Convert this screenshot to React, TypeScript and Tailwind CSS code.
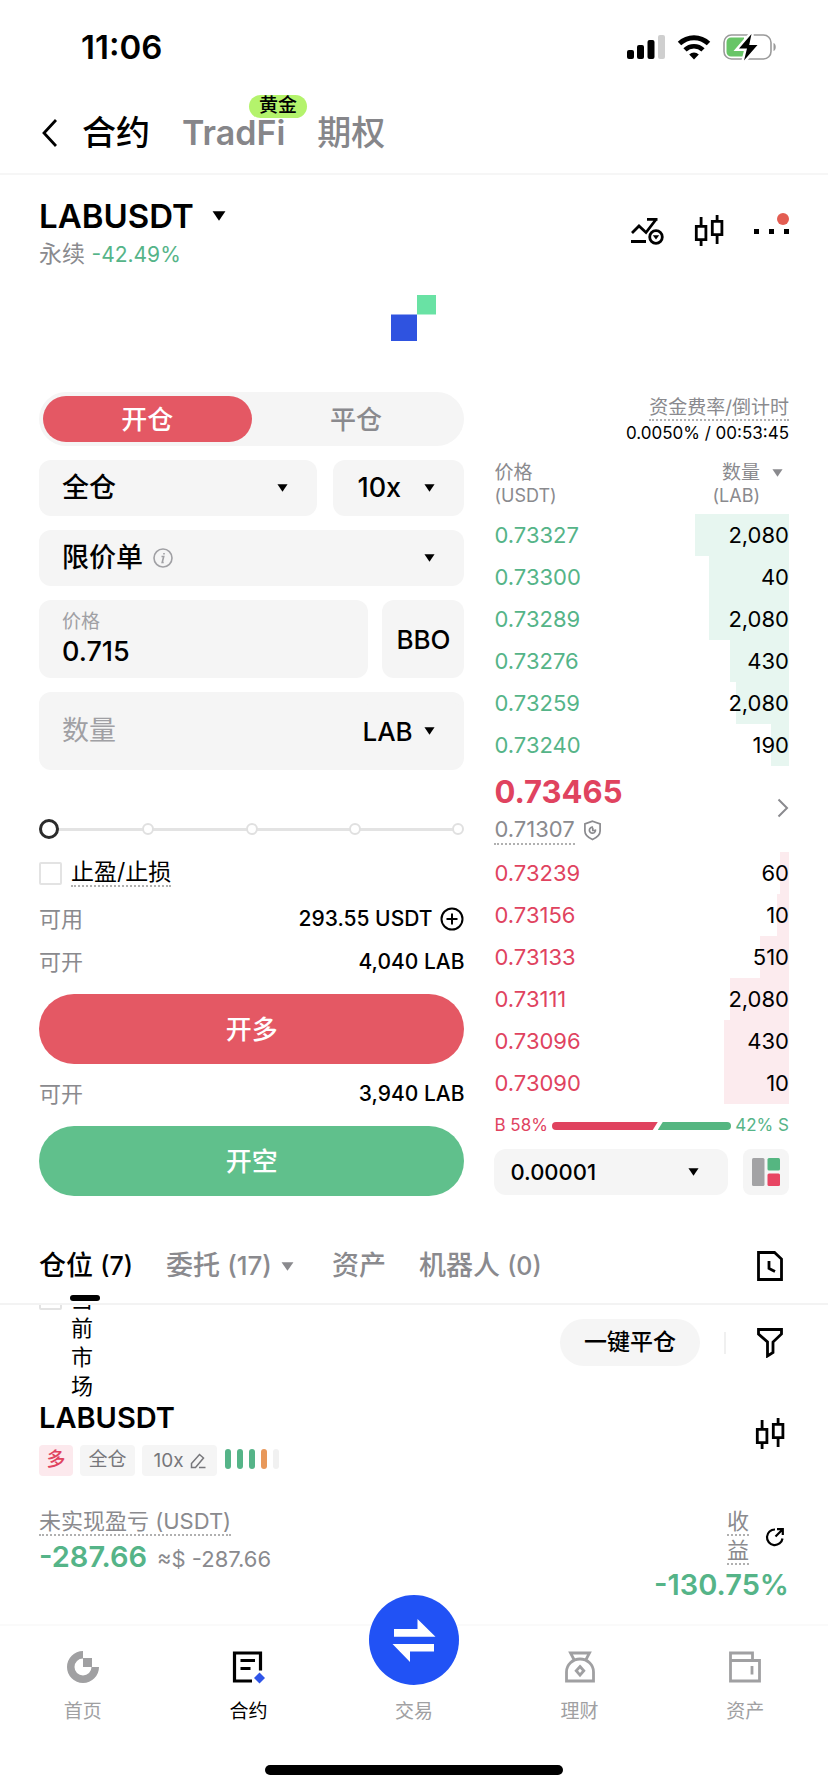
import { useState } from 'react';
import type { ReactNode } from 'react';

interface BookRow {
  price: string;
  amount: string;
  depth: number;
}

// depth = bar width in % of the book
const asks: BookRow[] = [
  { price: '0.73327', amount: '2,080', depth: 32 },
  { price: '0.73300', amount: '40', depth: 27 },
  { price: '0.73289', amount: '2,080', depth: 27 },
  { price: '0.73276', amount: '430', depth: 20 },
  { price: '0.73259', amount: '2,080', depth: 18 },
  { price: '0.73240', amount: '190', depth: 6 },
];

const bids: BookRow[] = [
  { price: '0.73239', amount: '60', depth: 3 },
  { price: '0.73156', amount: '10', depth: 4 },
  { price: '0.73133', amount: '510', depth: 10 },
  { price: '0.73111', amount: '2,080', depth: 20 },
  { price: '0.73096', amount: '430', depth: 22 },
  { price: '0.73090', amount: '10', depth: 22 },
];

const Caret = ({ className = 'w-[11px] h-[8px]' }: { className?: string }) => (
  <svg viewBox="0 0 12 8" className={`shrink-0 fill-current ${className}`}>
    <path d="M0.5 0h11L6 8z" />
  </svg>
);

const CandleIcon = () => (
  <svg viewBox="0 0 32 34" className="w-8 h-[34px]" fill="none" stroke="currentColor" strokeWidth="2.8">
    <path d="M3.3 12.3h9.6v13.4H3.3zM8.1 3v9.3M8.1 25.7V32M19.3 7.3h9.6v13.4h-9.6zM24.1 1v6.3M24.1 20.7V30" />
  </svg>
);

const StatusBar = () => (
  <div className="flex items-center justify-between pt-[27px] pl-[81px] pr-[50px]">
    <span className="text-[33px] leading-10 font-semibold">11:06</span>
    <div className="flex items-center gap-[11px]">
      <svg viewBox="0 0 40 26" className="w-10 h-[26px]">
        <rect x="1" y="16" width="7" height="9" rx="2" />
        <rect x="11" y="11" width="7" height="14" rx="2" />
        <rect x="21.5" y="6" width="7" height="19" rx="2" />
        <rect x="32" y="1" width="7" height="24" rx="2" fill="#cfcfcf" />
      </svg>
      <svg viewBox="0 0 34 26" className="w-[34px] h-[26px]">
        <path d="M2.5 9.5a21 21 0 0 1 29 0" fill="none" stroke="#000" strokeWidth="5" />
        <path d="M8 15.8a13 13 0 0 1 18 0" fill="none" stroke="#000" strokeWidth="4.6" />
        <path d="M17 25.5l-4.800-5a7 7 0 0 1 9.600 0z" />
      </svg>
      <svg viewBox="0 0 56 28" className="w-14 h-7">
        <rect x="2" y="2" width="47" height="24" rx="7.5" fill="#fff" stroke="#9a9a9a" strokeWidth="1.6" />
        <path d="M9 4.500h13v19H9a4.500 4.500 0 0 1-4.500-4.500V9A4.500 4.500 0 0 1 9 4.500z" fill="#68c567" />
        <path d="M51.500 10v8c3-1 3-7 0-8z" fill="#9a9a9a" />
        <path d="M29.500 1L17 15.500h8L22 27.500 35.500 12h-8.300z" stroke="#fff" strokeWidth="5" />
        <path d="M29.500 1L17 15.500h8L22 27.500 35.500 12h-8.300z" />
      </svg>
    </div>
  </div>
);

const TopTabs = () => (
  <nav className="mt-[38px] flex items-center h-14 pl-[41px] border-b-2 border-[#f6f6f6] box-content pb-[12px]">
    <button aria-label="返回" className="w-4">
      <svg viewBox="0 0 16 28" className="w-4 h-7" fill="none" stroke="currentColor" strokeWidth="2.8">
        <path d="M15 1L3 14l12 13" />
      </svg>
    </button>
    <button className="ml-[25px] text-[34px] leading-10 font-medium">合约</button>
    <button className="relative ml-[32px] text-[34px] leading-10 font-semibold text-[#86868a]">
      TradFi
      <span className="absolute left-[67px] -top-[18px] h-[23px] w-[58px] rounded-xl bg-[#b4f36c] text-[19px] leading-[22px] font-medium text-black">
        黄金
      </span>
    </button>
    <button className="ml-[32px] text-[34px] leading-10 font-medium text-[#86868a]">期权</button>
  </nav>
);

const PairHeader = () => (
  <header className="flex justify-between px-[39px] pt-[21px]">
    <div>
      <button className="flex items-center gap-[18px] text-[33px] leading-[40px] font-semibold">
        LABUSDT
        <Caret className="w-[14px] h-[10px]" />
      </button>
      <div className="mt-[3px] text-[23px] leading-[30px] text-[#8a8a8e]">
        永续 <span className="text-[21px] text-[#55b488]">-42.49%</span>
      </div>
    </div>
    <div className="flex items-center gap-[29px] h-[34px] mt-[18px]">
      <button aria-label="策略">
        <svg viewBox="0 0 34 28" className="w-[34px] h-7" fill="none" stroke="currentColor" strokeWidth="2.8">
          <path d="M2 16l7-7 7 6.500L26 2.500M17 2.300h10.500M1 24.500h15" />
          <circle cx="26" cy="20" r="6.300" />
          <path d="M22.800 18.300h6.400L26 22.500z" fill="currentColor" stroke="none" />
        </svg>
      </button>
      <button aria-label="K线">
        <CandleIcon />
      </button>
      <button aria-label="更多" className="relative flex gap-[10px]">
        <i className="size-[5px] bg-black" />
        <i className="size-[5px] bg-black" />
        <i className="size-[5px] bg-black" />
        <i className="absolute -top-[16px] right-0 size-3 rounded-full bg-[#e35d52]" />
      </button>
    </div>
  </header>
);

interface SelectBoxProps {
  label: string;
  value: string;
  className?: string;
  textClass?: string;
  children?: ReactNode;
}

const SelectBox = ({ label, value, className = '', textClass = 'pl-[23px] text-[27px]', children }: SelectBoxProps) => (
  <div className={`relative rounded-xl bg-[#f5f5f5] ${className}`}>
    <select
      aria-label={label}
      defaultValue={value}
      className={`w-full h-full appearance-none bg-transparent font-medium outline-none ${textClass}`}
    >
      <option>{value}</option>
    </select>
    {children}
    <Caret className="w-[11px] h-[8px] pointer-events-none absolute right-[29px] top-1/2 -mt-1" />
  </div>
);

const InfoRow = ({ label, children }: { label: string; children: ReactNode }) => (
  <div className="flex items-center justify-between h-[26px] text-[22px]">
    <span className="text-[#8a8a8e]">{label}</span>
    <span className="flex items-center gap-2 text-[21px] font-medium">{children}</span>
  </div>
);

const OrderForm = () => {
  const [price, setPrice] = useState('0.715');
  const [amount, setAmount] = useState('');
  const [percent, setPercent] = useState(0);

  return (
    <form className="min-w-0" onSubmit={(e) => e.preventDefault()}>
      <div className="flex flex-col gap-[14px]">
        <div className="grid grid-cols-2 h-[54px] p-[4px] rounded-full bg-[#f5f5f5] text-[26px] font-medium">
          <button type="button" className="rounded-full bg-[#e45864] text-white">开仓</button>
          <button type="button" className="rounded-full text-[#8a8a8e]">平仓</button>
        </div>

        <div className="flex gap-4 h-14">
          <SelectBox label="保证金模式" value="全仓" className="flex-1" />
          <SelectBox label="杠杆" value="10x" className="w-[131px]" textClass="pl-[24px] text-[27px]" />
        </div>

        <SelectBox label="委托类型" value="限价单" className="h-14">
          <svg viewBox="0 0 20 20" className="absolute left-[114px] top-[18px] size-5" fill="none" stroke="#a0a0a4" strokeWidth="1.6">
            <circle cx="10" cy="10" r="9" />
            <path d="M8.500 8.500h2.200l-1.500 6h1.500M11 5v1.600" />
          </svg>
        </SelectBox>

        <div className="flex gap-[14px] h-[78px]">
          <label className="flex-1 min-w-0 rounded-xl bg-[#f5f5f5] px-[23px] pt-[9px]">
            <span className="block text-[19px] leading-[26px] text-[#a0a0a4]">价格</span>
            <input
              value={price}
              onChange={(e) => setPrice(e.target.value)}
              className="block w-full bg-transparent text-[27px] leading-[34px] h-[34px] font-medium outline-none"
            />
          </label>
          <button type="button" className="w-[82px] rounded-xl bg-[#f5f5f5] text-[26px] font-medium">BBO</button>
        </div>

        <div className="flex items-center h-[78px] rounded-xl bg-[#f5f5f5] pl-[23px]">
          <input
            aria-label="数量"
            placeholder="数量"
            value={amount}
            onChange={(e) => setAmount(e.target.value)}
            className="flex-1 min-w-0 bg-transparent text-[27px] outline-none placeholder:text-[#a0a0a4]"
          />
          <SelectBox label="单位" value="LAB" className="h-14 w-[102px]" textClass="text-[26px]" />
        </div>
      </div>

      {/* percent slider, five stops */}
      <div className="relative mt-[49px] h-5">
        <div className="absolute inset-x-2 top-[9px] h-[3px] bg-[#e3e3e3]" />
        <div className="absolute inset-0 flex items-center justify-between">
          {[0, 25, 50, 75, 100].map((stop) => (
            <i key={stop} className="size-3 rounded-full border-2 border-[#e0e0e0] bg-white" />
          ))}
        </div>
        <input
          type="range"
          aria-label="仓位比例"
          min={0}
          max={100}
          value={percent}
          onChange={(e) => setPercent(Number(e.target.value))}
          className="absolute inset-0 m-0 w-full h-5 appearance-none bg-transparent [&::-webkit-slider-thumb]:appearance-none [&::-webkit-slider-thumb]:size-5 [&::-webkit-slider-thumb]:rounded-full [&::-webkit-slider-thumb]:border-3 [&::-webkit-slider-thumb]:border-[#2b2b2b] [&::-webkit-slider-thumb]:bg-white"
        />
      </div>

      <label className="mt-[22px] flex items-center gap-[9px] h-6">
        <input type="checkbox" className="appearance-none size-[23px] rounded-xs border-2 border-[#e3e3e3]" />
        <span className="border-b-2 border-dotted border-[#b0b0b0] text-[23px] leading-[26px]">止盈/止损</span>
      </label>

      <div className="mt-[21px] flex flex-col gap-[17px]">
        <InfoRow label="可用">
          293.55 USDT
          <svg viewBox="0 0 24 24" className="size-6" fill="none" stroke="currentColor" strokeWidth="2">
            <circle cx="12" cy="12" r="10.500" />
            <path d="M12 6.500v11M6.500 12h11" />
          </svg>
        </InfoRow>
        <InfoRow label="可开">4,040 LAB</InfoRow>
      </div>
      <button className="mt-[19px] w-full h-[70px] rounded-full bg-[#e45864] text-[26px] font-medium text-white">开多</button>
      <div className="mt-[17px]">
        <InfoRow label="可开">3,940 LAB</InfoRow>
      </div>
      <button className="mt-[19px] w-full h-[70px] rounded-full bg-[#60c08c] text-[26px] font-medium text-white">开空</button>
    </form>
  );
};

const BookRows = ({ rows, priceClass, barClass }: { rows: BookRow[]; priceClass: string; barClass: string }) => (
  <tbody className="text-[22px]">
    {rows.map((row) => (
      <tr key={row.price} className="relative h-[42px]">
        <td className={`p-0 ${priceClass}`}>{row.price}</td>
        <td className="p-0 text-right">
          <i className={`absolute right-0 inset-y-0 ${barClass}`} style={{ width: `${row.depth}%` }} />
          <span className="relative">{row.amount}</span>
        </td>
      </tr>
    ))}
  </tbody>
);

const OrderBook = () => (
  <section className="min-w-0">
    <div className="flex flex-col items-end pt-[5px]">
      <span className="border-b-2 border-dotted border-[#b0b0b0] text-[19px] leading-[22px] text-[#8a8a8e]">资金费率/倒计时</span>
      <span className="text-[17px] leading-6">0.0050% / 00:53:45</span>
    </div>

    <table className="mt-[16px] w-full border-collapse">
      <thead className="text-[19px] leading-[23px] text-[#8a8a8e]">
        <tr className="h-[53px] align-top">
          <th className="p-0 text-left font-normal">
            价格
            <br />
            <span className="text-[18px]">(USDT)</span>
          </th>
          <th className="p-0 font-normal">
            <div className="flex justify-end gap-3 pr-[6px] text-right">
              <span>
                数量
                <br />
                <span className="text-[18px]">(LAB)</span>
              </span>
              <Caret className="mt-2 w-[11px] h-[8px]" />
            </div>
          </th>
        </tr>
      </thead>
      <BookRows rows={asks} priceClass="text-[#55b488]" barClass="bg-[#e7f6f0]" />
      <tbody>
        <tr className="h-[86px] align-top">
          <td className="p-0 pt-[6px]">
            <div className="text-[31px] leading-[40px] font-bold text-[#e0435f]">0.73465</div>
            <div className="mt-[3px] flex items-center gap-2 text-[#8a8a8e]">
              <span className="border-b-2 border-dotted border-[#b0b0b0] text-[22px] leading-[28px]">0.71307</span>
              <svg viewBox="0 0 20 22" className="w-[19px] h-[21px]" fill="none" stroke="currentColor" strokeWidth="1.8">
                <path d="M10 1.200l8 2.800v7.500c0 4-3.500 7-8 9-4.500-2-8-5-8-9V4z" />
                <path d="M13 9.800a3.200 3.200 0 1 1-2.500-2.300M10.300 8v3h3" />
              </svg>
            </div>
          </td>
          <td className="p-0 pt-8">
            <button aria-label="展开" className="block ml-auto">
              <svg viewBox="0 0 12 20" className="w-3 h-5" fill="none" stroke="#8a8a8e" strokeWidth="2">
                <path d="M1.500 1.500L10 10l-8.500 8.500" />
              </svg>
            </button>
          </td>
        </tr>
      </tbody>
      <BookRows rows={bids} priceClass="text-[#e0435f]" barClass="bg-[#fcebee]" />
    </table>

    <div className="mt-[10px] flex items-center gap-1 h-6 text-[17px]">
      <span className="text-[#e0435f]">B 58%</span>
      <div className="flex flex-1">
        <i className="h-2 rounded-l-full bg-[#e0435f] [clip-path:polygon(0_0,100%_0,calc(100%-5px)_100%,0_100%)]" style={{ width: '59%' }} />
        <i className="h-2 rounded-r-full bg-[#55b681] [clip-path:polygon(5px_0,100%_0,100%_100%,0_100%)]" style={{ width: '41%' }} />
      </div>
      <span className="text-[#55b488]">42% S</span>
    </div>

    <div className="mt-[11px] flex gap-[15px] h-[46px]">
      <SelectBox label="价格精度" value="0.00001" className="flex-1" textClass="pl-4 text-[22px]" />
      <button aria-label="盘口样式" className="flex items-center justify-center w-[46px] rounded-lg bg-[#f5f5f5]">
        <svg viewBox="0 0 28 28" className="size-7">
          <rect width="12.500" height="28" rx="1.500" fill="#a3a3a5" />
          <rect x="15.500" width="12.500" height="12.500" rx="1.500" fill="#55b681" />
          <rect x="15.500" y="15.500" width="12.500" height="12.500" rx="1.500" fill="#e84563" />
        </svg>
      </button>
    </div>
  </section>
);

const PositionTabs = () => (
  <nav className="mt-[39px] flex items-center h-[70px] px-[39px] pb-[6px] border-b-2 border-[#f3f3f3] text-[27px] text-[#8a8a8e]">
    <button className="relative font-medium text-black">
      仓位 <span className="text-[25px]">(7)</span>
      <i className="absolute left-[31px] -bottom-[15px] h-[6px] w-[30px] rounded-full bg-black" />
    </button>
    <button className="ml-[33px] flex items-center gap-[9px] font-medium">
      <span>
        委托 <span className="text-[26px]">(17)</span>
      </span>
      <Caret className="w-[13px] h-[9px]" />
    </button>
    <button className="ml-[38px] font-medium">资产</button>
    <button className="ml-[33px] font-medium">
      机器人 <span className="text-[25px]">(0)</span>
    </button>
    <button aria-label="历史记录" className="ml-auto mr-[6px] text-black">
      <svg viewBox="0 0 26 30" className="w-[26px] h-[30px]" fill="none" stroke="currentColor" strokeWidth="2.8">
        <path d="M1.500 1.500h16L24.500 8v20.500h-23z" />
        <path d="M12 10v7.500l6 3" />
      </svg>
    </button>
  </nav>
);

const Positions = () => (
  <section className="overflow-hidden px-[39px]">
    {/* list is scrolled a little under the tabs */}
    <div className="-mt-[20px] flex items-start">
      <label className="flex gap-[9px] items-start">
        <input type="checkbox" className="appearance-none mt-[2px] size-[23px] rounded-xs border-2 border-[#e3e3e3]" />
        <span className="w-[22px] break-all text-[22px] leading-[29px]">当前市场</span>
      </label>
      <div className="ml-auto mt-[34px] mr-[6px] flex items-center">
        <button className="w-[140px] h-[47px] rounded-full bg-[#f5f5f5] text-[23px] font-medium">一键平仓</button>
        <i className="ml-6 h-[22px] w-[2px] bg-[#f0f0f0]" />
        <button aria-label="筛选" className="ml-[31px]">
          <svg viewBox="0 0 26 30" className="w-[26px] h-[30px]" fill="none" stroke="currentColor" strokeWidth="2.8">
            <path d="M1.500 1.500h23v4.500l-8.500 8V24.500l-5.500 3.500V14l-9-8z" />
          </svg>
        </button>
      </div>
    </div>

    <div className="flex items-start justify-between">
      <h2 className="text-[29px] leading-[34px] font-semibold">LABUSDT</h2>
      <button aria-label="K线" className="mt-[16px] -mb-5 mr-[3px]">
        <CandleIcon />
      </button>
    </div>
    <div className="mt-[10px] flex gap-[7px] h-[31px] text-[19px] leading-[30px] text-[#77777b]">
      <span className="w-[34px] rounded-sm bg-[#fce9ed] text-center font-medium text-[#e0435f]">多</span>
      <span className="w-[55px] rounded-sm bg-[#f5f5f5] text-center">全仓</span>
      <button className="w-[75px] flex items-center justify-center gap-[6px] rounded-sm bg-[#f5f5f5]">
        10x
        <svg viewBox="0 0 16 16" className="size-4" fill="none" stroke="currentColor" strokeWidth="1.5">
          <path d="M1.500 14.500v-4l8-9 4 3.500-8 9.500zM9 14.500h6.500" />
        </svg>
      </button>
      <div className="flex gap-[6px] pt-1 pl-[1px]">
        <i className="w-[6px] h-5 rounded-full bg-[#55b488]" />
        <i className="w-[6px] h-5 rounded-full bg-[#55b488]" />
        <i className="w-[6px] h-5 rounded-full bg-[#55b488]" />
        <i className="w-[6px] h-5 rounded-full bg-[#e8985a]" />
        <i className="w-[6px] h-5 rounded-full bg-[#f1f1f1]" />
      </div>
    </div>

    <div className="mt-[32px] flex justify-between">
      <div>
        <div className="flex">
          <span className="border-b-2 border-dotted border-[#b0b0b0] text-[22px] leading-[26px] text-[#8a8a8e]">未实现盈亏 (USDT)</span>
        </div>
        <div className="mt-[3px] flex items-baseline gap-[10px] leading-[36px]">
          <span className="text-[29px] font-semibold text-[#55b488]">-287.66</span>
          <span className="text-[22px] text-[#8a8a8e]">≈$ -287.66</span>
        </div>
      </div>
      <div className="flex flex-col items-end">
        <div className="flex items-center gap-4 pr-1">
          <span className="flex flex-col gap-px text-[22px] leading-[26px] text-[#8a8a8e]">
            <span className="border-b-2 border-dotted border-[#b0b0b0]">收</span>
            <span className="border-b-2 border-dotted border-[#b0b0b0]">益</span>
          </span>
          <button aria-label="分享">
            <svg viewBox="0 0 20 20" className="size-5" fill="none" stroke="currentColor" strokeWidth="2.2">
              <path d="M10 2.500A7.800 7.800 0 1 0 17.500 11.500M10.500 9.500L17.500 2.500M12 2.200h5.800V8" />
            </svg>
          </button>
        </div>
        <span className="mt-px text-[29px] leading-[38px] font-semibold text-[#55b488]">-130.75%</span>
      </div>
    </div>
  </section>
);

const NavItem = ({ label, active = false, children }: { label: string; active?: boolean; children: ReactNode }) => (
  <a href="#" className={`flex flex-col items-center ${active ? 'text-black' : 'text-[#a0a0a2]'}`}>
    <span className="flex items-center justify-center h-[82px]">{children}</span>
    <span className="text-[19px] leading-[26px] -mt-[9px]">{label}</span>
  </a>
);

const BottomNav = () => (
  <footer className="mt-5 border-t-2 border-[#fafafa]">
    <nav className="grid grid-cols-5">
      <NavItem label="首页">
        <svg viewBox="0 0 34 34" className="size-[34px] fill-current">
          <path d="M17 1a16 16 0 1 0 16 16h-7.500A8.500 8.500 0 1 1 17 8.500z" />
          <path d="M17 8h9v9h-9z" />
        </svg>
      </NavItem>
      <NavItem label="合约" active>
        <svg viewBox="0 0 34 34" className="size-[34px]" fill="none" stroke="currentColor" strokeWidth="3.2">
          <path d="M21 31H3.500V3h26v17.500M9.500 10.500H24M9.500 18.500H19.500" />
          <path d="M28.500 22.500l5.500 5.500-5.500 5.500-5.500-5.500z" fill="#2f55e8" stroke="none" />
        </svg>
      </NavItem>
      <NavItem label="交易">
        <span className="flex items-center justify-center size-[90px] rounded-full bg-[#2152f5] -mt-[54px]">
          <svg viewBox="0 0 44 46" className="w-[44px] h-[46px] fill-white">
            <path d="M2 12h23.500V2L43.500 19.700H2zM42 27H.5L18 45V34.500h24z" />
          </svg>
        </span>
      </NavItem>
      <NavItem label="理财">
        <svg viewBox="0 0 34 34" className="size-[34px]" fill="none" stroke="currentColor" strokeWidth="2.8">
          <path d="M11.500 10.500L7.500 3h19l-4 7.500M3.500 31v-9a13.500 13 0 0 1 27 0v9z" />
          <path d="M17 16.500l3.800 4.300-3.800 4.300-3.800-4.300z" />
        </svg>
      </NavItem>
      <NavItem label="资产">
        <svg viewBox="0 0 34 34" className="size-[34px]" fill="none" stroke="currentColor" strokeWidth="2.8">
          <path d="M2.500 10.500V3h22v7.500M2.500 10.500h29v20.500h-29zM24 16v8.500" />
        </svg>
      </NavItem>
    </nav>
    <div className="mx-auto mt-[40px] mb-4 h-[10px] w-[36%] rounded-full bg-black" />
  </footer>
);

const App = () => (
  <div className="min-h-screen bg-white font-[Inter,'Noto_Sans_CJK_SC',sans-serif] text-black">
    <StatusBar />
    <TopTabs />
    <PairHeader />
    <svg viewBox="0 0 46 46" className="mx-auto mt-[25px] block size-[46px]">
      <path d="M26 0h19v19.500H26z" fill="#69e2a4" />
      <path d="M0 19.500h26V46H0z" fill="#2f53e0" />
    </svg>
    <main className="mt-[51px] grid grid-cols-[13fr_9fr] gap-[30px] px-[39px]">
      <OrderForm />
      <OrderBook />
    </main>
    <PositionTabs />
    <Positions />
    <BottomNav />
  </div>
);

export default App;
